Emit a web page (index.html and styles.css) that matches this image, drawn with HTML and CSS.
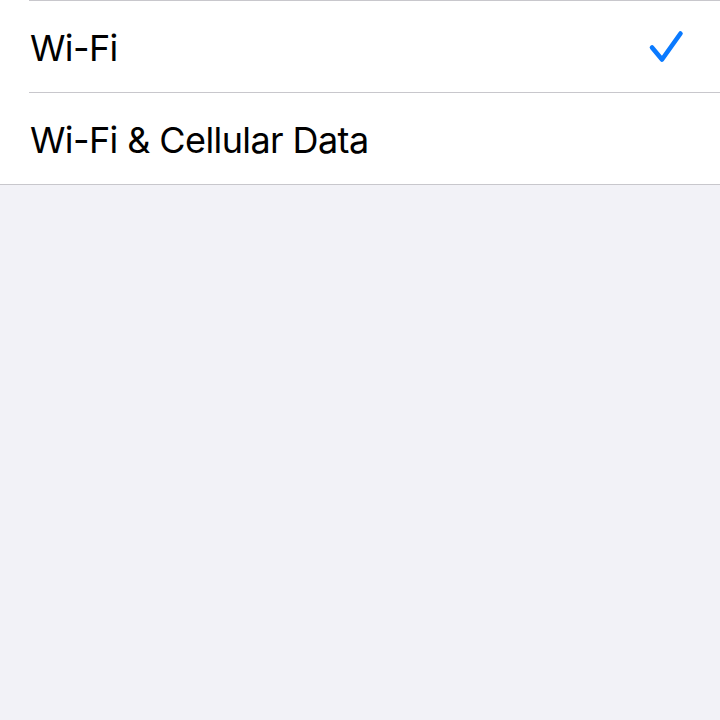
FILE: index.html
```html
<!DOCTYPE html>
<html>
<head>
<meta charset="utf-8">
<link rel="stylesheet" href="styles.css">
</head>
<body>
<div class="group">
  <div class="row first">
    <div class="cell">
      <span class="label">Wi-Fi</span>
      <svg class="check" width="36" height="36" viewBox="0 0 36 36"><path d="M4 17.5 L14 29.5 L32.5 3.5" fill="none" stroke="#0a7aff" stroke-width="4.6" stroke-linecap="round" stroke-linejoin="round"/></svg>
    </div>
  </div>
  <div class="row last">
    <div class="cell">
      <span class="label">Wi-Fi &amp; Cellular Data</span>
    </div>
  </div>
</div>
</body>
</html>
```
FILE: styles.css
```css
html, body {
  margin: 0;
  padding: 0;
  height: 100%;
  background: #f2f2f7;
}
body {
  font-family: Inter, "Liberation Sans", sans-serif;
  color: #000;
}
.group {
  background: #fff;
  border-bottom: 1px solid #c8c7cc;
}
.row {
  padding-left: 29px;
}
.cell {
  height: 91px;
  display: flex;
  align-items: center;
  justify-content: space-between;
  padding-left: 1px;
  padding-right: 36px;
  border-top: 1.5px solid #c8c7cc;
  box-sizing: content-box;
}
.label {
  font-size: 36px;
  letter-spacing: -0.6px;
  margin-top: 2px;
}
.check {
  display: block;
  margin-top: 2px;
}
```
